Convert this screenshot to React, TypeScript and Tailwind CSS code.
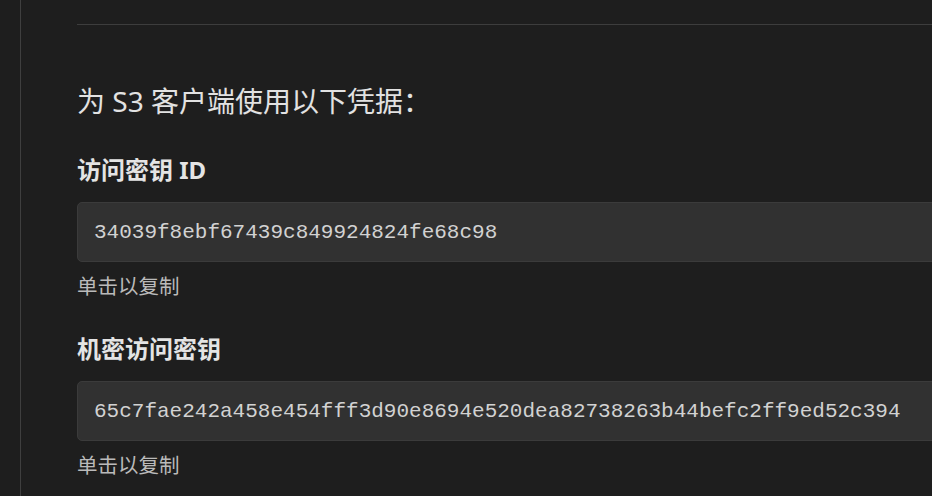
import React from "react";

const cjk = "font-['Noto_Sans','Noto_Sans_CJK_SC',sans-serif]";

function KeyField({ label, value }: { label: string; value: string }) {
  return (
    <div className="flex flex-col">
      <div className="text-[24px] leading-[36px] font-bold text-[#e4e4e4]">{label}</div>
      <div className="mt-[14px] h-[60px] w-[1000px] shrink-0 flex items-center rounded-[5px] border border-[#3b3b3b] bg-[#313131] pl-[16px]">
        <span className="font-['Liberation_Mono',monospace] text-[21px] leading-none text-[#d2d2d2] whitespace-nowrap">
          {value}
        </span>
      </div>
      <div className="mt-[9px] text-[20.5px] leading-[30px] text-[#bababa]">单击以复制</div>
    </div>
  );
}

export default function App() {
  return (
    <div className={`${cjk} w-[932px] h-[496px] overflow-hidden bg-[#1e1e1e] flex`}>
      <div className="w-[20px] shrink-0" />
      <div className="flex-1 border-l border-[#3f3f3f] pl-[56px] pt-[24px] flex flex-col min-w-0">
        <div className="h-px w-full bg-[#3d3d3d]" />
        <h2 className="mt-[55px] text-[28px] leading-[42px] font-normal text-[#e2e2e2] whitespace-nowrap">
          为 S3 客户端使用以下凭据：
        </h2>
        <div className="mt-[30px] flex flex-col gap-[30px]">
          <KeyField label="访问密钥 ID" value="34039f8ebf67439c849924824fe68c98" />
          <KeyField
            label="机密访问密钥"
            value="65c7fae242a458e454fff3d90e8694e520dea82738263b44befc2ff9ed52c394"
          />
        </div>
      </div>
    </div>
  );
}
